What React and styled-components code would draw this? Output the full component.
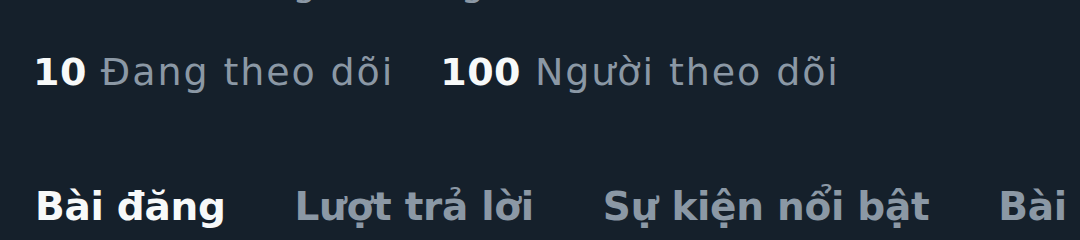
import React from "react";
import styled, { createGlobalStyle } from "styled-components";

const GlobalStyle = createGlobalStyle`
  html, body { margin: 0; padding: 0; background: #15202b; }
  body { font-family: "DejaVu Sans", "Noto Sans", sans-serif; overflow: hidden; }
`;

const Page = styled.div`
  width: 1080px;
  height: 240px;
  overflow: hidden;
  background: #15202b;
  display: flex;
  flex-direction: column;
  padding-left: 33px;
  box-sizing: border-box;
`;

const JoinedRow = styled.div`
  display: flex;
  align-items: flex-start;
  gap: 31px;
  margin-top: -40px;
  height: 44px;
  font-size: 38px;
  line-height: 44px;
  letter-spacing: 1.5px;
  color: #8b98a5;
  white-space: nowrap;
`;

const CalendarIcon = styled.svg`
  width: 40px;
  height: 36px;
  flex: none;
  fill: #8b98a5;
`;

const StatsRow = styled.div`
  display: flex;
  align-items: baseline;
  gap: 46px;
  margin-top: 46px;
  font-size: 38px;
  line-height: 44px;
  white-space: nowrap;
`;

const Stat = styled.div`
  display: flex;
  align-items: baseline;
`;

const Count = styled.span`
  font-weight: 700;
  letter-spacing: 0.5px;
  color: #f7f9f9;
`;

const Label = styled.span`
  font-weight: 400;
  letter-spacing: 1.9px;
  color: #8b98a5;
`;

const TabBar = styled.div`
  display: flex;
  gap: 69px;
  margin-top: 91px;
  padding-left: 2px;
  font-size: 39px;
  line-height: 44px;
  letter-spacing: -0.3px;
  white-space: nowrap;
`;

const Tab = styled.div`
  font-weight: 700;
  color: ${(p) => (p.$active ? "#f7f9f9" : "#8b98a5")};
`;

export default function App() {
  return (
    <>
      <GlobalStyle />
      <Page>
        <JoinedRow>
          <CalendarIcon viewBox="0 0 24 24">
            <path d="M7 4V3h2v1h6V3h2v1h1.5C19.89 4 21 5.12 21 6.5v12c0 1.38-1.11 2.5-2.5 2.5h-13C4.120 21 3 19.88 3 18.5v-12C3 5.12 4.12 4 5.5 4H7zm0 2H5.5c-.27 0-.5.22-.5.5v12c0 .28.23.5.5.5h13c.28 0 .5-.22.5-.5v-12c0-.28-.22-.5-.5-.5H17v1h-2V6H9v1H7V6zm0 6h2v-2H7v2zm0 4h2v-2H7v2zm4-4h2v-2h-2v2zm0 4h2v-2h-2v2zm4-4h2v-2h-2v2z" />
          </CalendarIcon>
          <span>Đã tham gia tháng 5 năm 2023</span>
        </JoinedRow>
        <StatsRow>
          <Stat>
            <Count>10</Count>
            <Label>&nbsp;Đang theo dõi</Label>
          </Stat>
          <Stat>
            <Count>100</Count>
            <Label>&nbsp;Người theo dõi</Label>
          </Stat>
        </StatsRow>
        <TabBar>
          <Tab $active>Bài đăng</Tab>
          <Tab>Lượt trả lời</Tab>
          <Tab>Sự kiện nổi bật</Tab>
          <Tab>Bài viết</Tab>
        </TabBar>
      </Page>
    </>
  );
}
